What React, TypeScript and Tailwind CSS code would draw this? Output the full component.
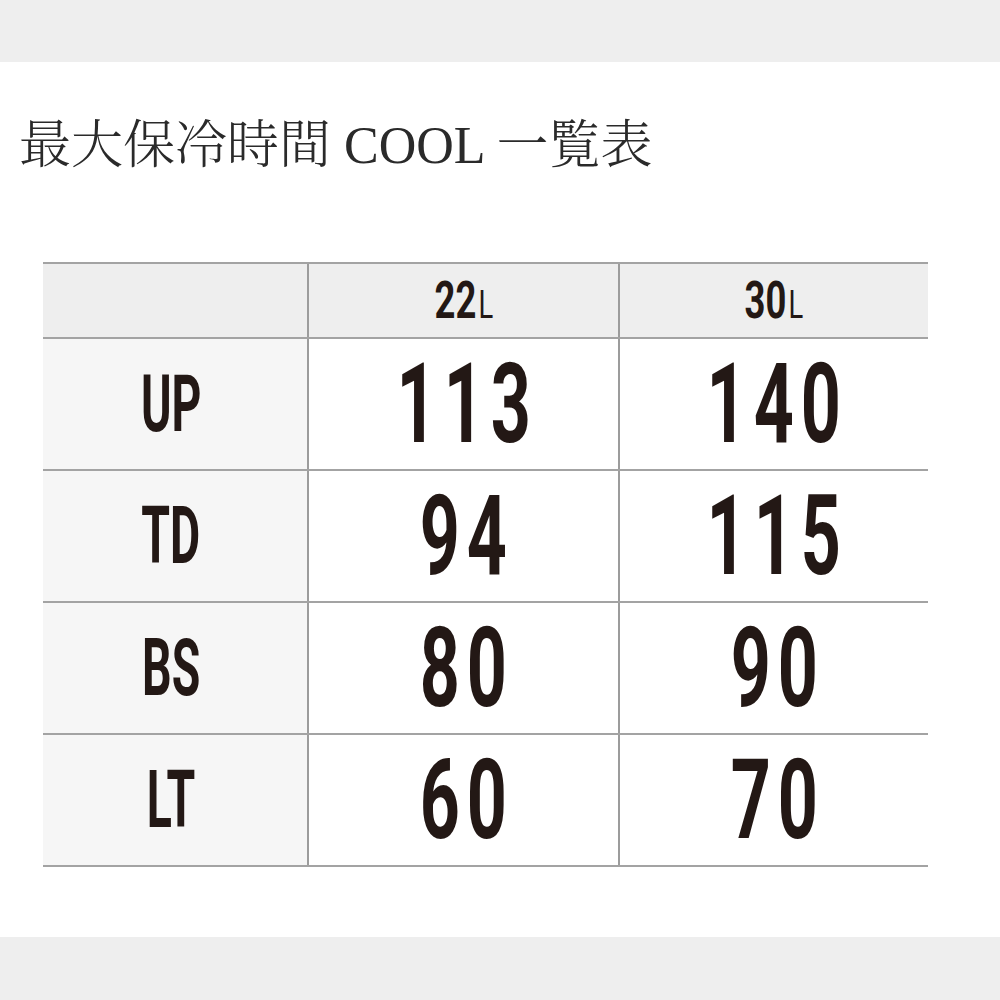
const rows = [
  { label: "UP", a: "113", b: "140" },
  { label: "TD", a: "94", b: "115" },
  { label: "BS", a: "80", b: "90" },
  { label: "LT", a: "60", b: "70" },
];

const cond = "font-['Roboto','Liberation_Sans',sans-serif] text-[#231815]";

function HeadCell({ size, last }: { size: string; last?: boolean }) {
  return (
    <div
      className={
        "flex h-[73px] items-center justify-center bg-[#eeeeee] " +
        (last ? "" : "border-r-2 border-[#9c9c9c]")
      }
    >
      <span className={"flex items-baseline scale-x-[0.7] leading-none " + cond}>
        <span className="text-[52px] font-bold">{size}</span>
        <span className="ml-[3px] text-[39px] font-normal">L</span>
      </span>
    </div>
  );
}

export default function App() {
  return (
    <div className="flex h-[1000px] w-[1000px] flex-col bg-white">
      <div className="h-[62px] bg-[#eeeeee]" />

      <main className="flex-1 pt-[58px]">
        <h1 className="h-[57px] pl-[19px] text-[52px] font-light leading-none text-[#2a2a2a] font-['Liberation_Serif','Noto_Serif_CJK_JP','Noto_Sans_CJK_JP',serif]">
          最大保冷時間 COOL 一覧表
        </h1>

        <div className="ml-[43px] mt-[85px] w-[885px] border-t-2 border-[#a3a3a3]">
          <div className="grid grid-cols-[266px_311px_308px] border-b-2 border-[#a3a3a3]">
            <div className="h-[73px] border-r-2 border-[#9c9c9c] bg-[#eeeeee]" />
            <HeadCell size="22" />
            <HeadCell size="30" last />
          </div>

          {rows.map((r) => (
            <div
              key={r.label}
              className="grid grid-cols-[266px_311px_308px] border-b-2 border-[#a3a3a3]"
            >
              <div className="flex h-[130px] items-center justify-center border-r-2 border-[#9c9c9c] bg-[#f6f6f6] pr-[8px]">
                <span className={"scale-x-[0.58] text-[80px] font-bold leading-none " + cond}>
                  {r.label}
                </span>
              </div>
              <div className="flex h-[130px] items-center justify-center border-r-2 border-[#9c9c9c]">
                <span className={"scale-x-[0.63] pl-[0.1em] text-[111px] font-bold leading-none tracking-[0.1em] " + cond}>
                  {r.a}
                </span>
              </div>
              <div className="flex h-[130px] items-center justify-center">
                <span className={"scale-x-[0.63] pl-[0.1em] text-[111px] font-bold leading-none tracking-[0.1em] " + cond}>
                  {r.b}
                </span>
              </div>
            </div>
          ))}
        </div>
      </main>

      <div className="h-[63px] bg-[#eeeeee]" />
    </div>
  );
}
